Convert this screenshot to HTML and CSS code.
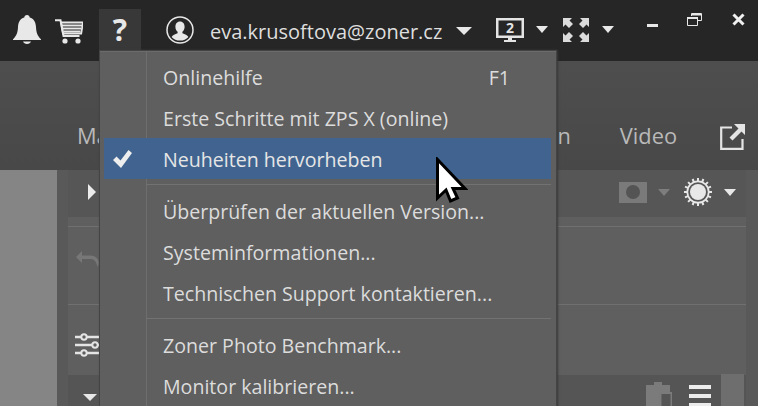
FILE: index.html
```html
<!DOCTYPE html>
<html lang="de">
<head>
<meta charset="utf-8">
<title>Zoner Photo Studio X</title>
<link rel="stylesheet" href="styles.css">
</head>
<body>
<div class="app">
  <header class="topbar">
    <svg class="ic bell" viewBox="0 0 28 29"><path d="M14 0c1.700 0 2.600 1 2.700 2.600C21 3.800 22.800 7.500 23 12c.2 5 1.300 8.800 5 12.200V25H0v-.8c3.700-3.400 4.800-7.200 5-12.200.2-4.500 2-8.200 6.300-9.400C11.400 1 12.300 0 14 0z" fill="#e8e8e8"/><path d="M10 26.500h8c-.5 1.600-2.100 2.500-4 2.500s-3.500-.9-4-2.500z" fill="#e8e8e8"/></svg>
    <svg class="ic cart" viewBox="0 0 28 25"><path d="M0 1.200h5.500l3 15.800h16" fill="none" stroke="#e8e8e8" stroke-width="2"/><path d="M6 3.500h22l-1.800 11H8z" fill="none" stroke="#e8e8e8" stroke-width="1.800"/><path d="M7 6.500h20M8 9.500h18M8.500 12.500h17" stroke="#e8e8e8" stroke-width="1.800"/><circle cx="10" cy="22" r="2.600" fill="#e8e8e8"/><circle cx="23" cy="22" r="2.600" fill="#e8e8e8"/></svg>
    <div class="help">?</div>
    <svg class="ic user" viewBox="0 0 28 28"><circle cx="14" cy="14" r="13" fill="none" stroke="#e8e8e8" stroke-width="1.500"/><path d="M14 5.500c3 0 4.600 2.300 4.600 5.200 0 2.300-1 4.200-2.200 5.100v1.500c2.500 1 5 1.700 6 3.600C20.400 23.300 17.400 24.500 14 24.500s-6.400-1.200-8.400-3.600c1-1.900 3.500-2.600 6-3.600v-1.500c-1.200-.9-2.200-2.800-2.200-5.100 0-2.900 1.600-5.200 4.600-5.200z" fill="#e8e8e8"/></svg>
    <span class="email">eva.krusoftova@zoner.cz</span>
    <i class="tri tri-lg email-tri"></i>
    <svg class="ic monitor" viewBox="0 0 28 24"><path d="M0 0h28v20H16v2h4v2H8v-2h4v-2H0z" fill="#e4e4e4"/><rect x="2.500" y="2.500" width="23" height="15" fill="#262626"/><text x="14" y="15" text-anchor="middle" class="monitor-num">2</text></svg>
    <i class="tri mon-tri"></i>
    <svg class="ic expand" viewBox="0 0 26 24"><path d="M0 0h9L6.500 2.500 10 6 6 10 2.500 6.500 0 9zM26 0v9l-2.500-2.500L20 10l-4-4 3.500-3.500L17 0zM0 24v-9l2.500 2.500L6 14l4 4-3.500 3.500L9 24zM26 24h-9l2.500-2.500L16 18l4-4 3.500 3.500L26 15z" fill="#dcdcdc"/></svg>
    <i class="tri exp-tri"></i>
    <svg class="ic win-min" viewBox="0 0 11 3"><rect width="11" height="3" fill="#e8e8e8"/></svg>
    <svg class="ic win-res" viewBox="0 0 15 13"><path d="M4.500 3V.5h10v7H11M.5 4.500h10v8H.5z" fill="none" stroke="#e8e8e8"/><path d="M4 1h11v1.500H4zM0 4h11v2H0z" fill="#e8e8e8"/></svg>
    <svg class="ic win-close" viewBox="0 0 13 13"><path d="M1.500 1.500l10 10M11.500 1.500l-10 10" stroke="#f0f0f0" stroke-width="3"/></svg>
  </header>

  <nav class="modules">
    <div class="module-list">
      <span class="module-first">Manager</span><span>Erstellen</span><span>Video</span>
    </div>
    <svg class="ic popout" viewBox="0 0 25 26"><path d="M12 3.500H1.200v21.300h21.300V15" fill="none" stroke="#e4e4e4" stroke-width="2.200"/><path d="M14 0h11v11l-3.500-3.500-9 9-3-3 9-9z" fill="#e4e4e4"/></svg>
  </nav>

  <main class="workspace">
    <div class="preview"></div>
    <section class="panel">
      <div class="panel-head">
        <i class="tri-right"></i>
        <div class="head-tools">
          <span class="cam"><i></i></span>
          <i class="tri dim-tri"></i>
          <svg class="ic gear" viewBox="0 0 28 28"><g stroke="#e8e8e8" stroke-width="2"><path d="M14 0v4M14 24v4M0 14h4M24 14h4M4.100 4.100l2.800 2.800M21.100 21.100l2.800 2.800M4.100 23.900l2.800-2.800M21.100 6.900l2.800-2.800M8.600 1l1.500 3.700M17.900 23.300l1.500 3.700M1 8.600l3.700 1.500M23.300 17.900l3.700 1.500M1 19.400l3.700-1.500M23.300 10.100L27 8.600M8.600 27l1.500-3.700M17.900 4.700L19.400 1"/></g><circle cx="14" cy="14" r="11.500" fill="#e8e8e8"/><circle cx="14" cy="14" r="9.800" fill="#565656"/><circle cx="14" cy="14" r="8" fill="#e8e8e8"/></svg>
          <i class="tri gear-tri"></i>
        </div>
      </div>
      <div class="panel-body">
        <div class="tool-row undo-row">
          <svg class="ic undo" viewBox="0 0 26 20"><path d="M7 1L1 7l6 6V9h8c3.500 0 6 1.500 7.500 8 2-3 2.500-11-7.500-11.500H7z" fill="#777"/></svg>
        </div>
        <div class="tool-row sliders-row">
          <svg class="ic sliders" viewBox="0 0 26 24"><g stroke="#e4e4e4" stroke-width="2.400"><path d="M0 4h26M0 12h26M0 20h26"/></g><g fill="#5f5f5f" stroke="#e4e4e4" stroke-width="2"><circle cx="9" cy="4" r="2.700"/><circle cx="20" cy="12" r="2.700"/><circle cx="9" cy="20" r="2.700"/></g></svg>
        </div>
      </div>
      <div class="panel-foot">
        <i class="tri foot-tri"></i>
        <svg class="ic clip" viewBox="0 0 26 30"><path d="M0 3h8V0h8v3h8v7H14v16H0z" fill="#7b7b7b"/><path d="M14.500 11h11v18h-11z" fill="#555" stroke="#7b7b7b" stroke-width="2"/></svg>
        <div class="burger"><i></i><i></i><i></i></div>
        <div class="scroll-thumb"></div>
      </div>
    </section>
  </main>

  <div class="menu">
    <div class="row"><span class="label">Onlinehilfe</span><span class="key">F1</span></div>
    <div class="row"><span class="label">Erste Schritte mit ZPS X (online)</span></div>
    <div class="row active">
      <svg class="ic check" viewBox="0 0 19 18"><path d="M0 10l3.500-3.500 4 4L15.500 0 19 3 8 18z" fill="#eee"/></svg>
      <span class="label">Neuheiten hervorheben</span>
    </div>
    <div class="sep"></div>
    <div class="row"><span class="label">Überprüfen der aktuellen Version...</span></div>
    <div class="row"><span class="label">Systeminformationen...</span></div>
    <div class="row"><span class="label">Technischen Support kontaktieren...</span></div>
    <div class="sep"></div>
    <div class="row"><span class="label">Zoner Photo Benchmark...</span></div>
    <div class="row"><span class="label">Monitor kalibrieren...</span></div>
  </div>

  <svg class="pointer" viewBox="0 0 32 47"><path d="M1.500 2.500V41l8.500-8 4.500 11 7-3-4.500-9.500H29z" fill="#fff" stroke="#000" stroke-width="3"/></svg>
</div>
</body>
</html>
```

FILE: styles.css
```css
* { box-sizing: border-box; }
html, body { margin: 0; height: 100%; overflow: hidden; background: #262626; }
body { font-family: "Open Sans", "Noto Sans", sans-serif; color: #dcdcdc; }
.ic { display: block; flex: none; }
i { display: block; }

.app { position: relative; width: 758px; height: 406px; overflow: hidden; display: flex; flex-direction: column; }

/* top bar */
.topbar { height: 61px; flex: none; background: #262626; display: flex; align-items: flex-start; padding-left: 13px; }
.bell { width: 28px; height: 29px; margin-top: 15px; }
.cart { width: 28px; height: 25px; margin: 19px 0 0 14px; }
.help { width: 42px; height: 42px; margin: 9px 0 0 16px; background: #383838; color: #e8e8e8; font: 700 30px/42px "Open Sans", sans-serif; text-align: center; }
.user { width: 28px; height: 28px; margin: 16px 0 0 25px; }
.email { width: 231px; margin: 18px 0 0 16px; font-size: 20px; line-height: 27px; white-space: nowrap; color: #dedede; }
.monitor { width: 28px; height: 24px; margin: 18px 0 0 24px; }
.monitor-num { font: 700 14px "Open Sans", sans-serif; fill: #e4e4e4; }
.expand { width: 26px; height: 24px; margin: 18px 0 0 15px; }
.win-min { width: 11px; height: 3px; margin: 24px 0 0 33px; }
.win-res { width: 15px; height: 13px; margin: 13px 0 0 29px; }
.win-close { width: 13px; height: 13px; margin: 13px 0 0 30px; }

.tri { width: 0; height: 0; flex: none; border-style: solid; border-color: #e8e8e8 transparent transparent; border-width: 7px 6.500px 0; }
.tri-lg { border-width: 8px 8.500px 0; }
.email-tri { margin: 27px 0 0 15px; }
.mon-tri { margin: 26px 0 0 12px; }
.exp-tri { margin: 26px 0 0 13px; }

/* module tabs */
.modules { height: 109px; flex: none; background: linear-gradient(#4e4e4e, #484848); display: flex; align-items: flex-start; padding: 60px 13px 0 77px; }
.module-list { width: 600px; display: flex; gap: 49px; font-size: 21.800px; line-height: 30px; color: #b9b9b9; }
.module-first { margin-right: auto; }
.popout { width: 25px; height: 26px; margin: 3px 0 0 43px; }

/* workspace */
.workspace { flex: 1; display: flex; min-height: 0; }
.preview { width: 57px; flex: none; background: #858585; }
.panel { flex: 1; background: #5f5f5f; border-left: 11px solid #595959; border-right: 12px solid #595959; display: flex; flex-direction: column; min-height: 0; }
.panel-head { height: 47px; flex: none; background: #565656; display: flex; align-items: center; justify-content: space-between; padding: 0 10px 3px 20px; }
.tri-right { width: 0; height: 0; border-style: solid; border-color: transparent transparent transparent #ececec; border-width: 8px 0 8px 8px; }
.head-tools { display: flex; align-items: center; }
.cam { width: 28px; height: 21px; background: #7a7a7a; display: flex; align-items: center; justify-content: center; }
.cam i { width: 14px; height: 14px; border-radius: 50%; background: #545454; }
.dim-tri { margin-left: 11px; border-top-color: #7d7d7d; }
.gear { width: 28px; height: 28px; margin-left: 14px; }
.gear-tri { margin-left: 12px; }

.panel-body { flex: 1; min-height: 0; padding-top: 9px; }
.tool-row { border-top: 1px solid #707070; padding-left: 7px; }
.undo-row { height: 78px; padding-top: 23px; }
.undo { width: 26px; height: 20px; }
.sliders-row { height: 71px; padding-top: 28px; }
.sliders { width: 26px; height: 24px; }

.panel-foot { height: 31px; flex: none; background: #555; display: flex; align-items: flex-start; padding-top: 19px; position: relative; }
.foot-tri { margin-left: 15px; border-width: 7px 7.500px 0; }
.clip { width: 26px; height: 30px; position: absolute; left: 578px; top: 7px; }
.burger { position: absolute; left: 621px; top: 10px; width: 22px; display: flex; flex-direction: column; gap: 5px; }
.burger i { height: 4px; background: #ececec; }
.scroll-thumb { position: absolute; left: 653px; top: -1px; width: 23px; height: 32px; background: #6e6e6e; }

/* help menu */
.menu { position: absolute; left: 100px; top: 51px; width: 456px; height: 380px; background: #5f5f5f; border-top: 1px solid #6b6b6b; box-shadow: 0 0 0 1px #444, 1px 0 2px 1px #383838; padding: 4px 5px 0 4px; display: flex; flex-direction: column; background-image: linear-gradient(#6e6e6e, #6e6e6e); background-size: 1px 100%; background-repeat: no-repeat; background-position: 46px 0; }
.row { height: 41px; flex: none; display: flex; align-items: center; padding: 1px 41px 0 59px; font-size: 19.600px; color: #dcdcdc; position: relative; }
.label { white-space: nowrap; }
.key { margin-left: auto; }
.active { background: #40648f; color: #e6e6e6; }
.check { position: absolute; left: 9px; top: 12px; width: 19px; height: 18px; }
.sep { height: 11px; flex: none; margin-left: 42px; position: relative; }
.sep::before { content: ""; display: block; height: 1px; background: #727272; position: absolute; left: 0; right: 0; top: 5px; }

.pointer { position: absolute; left: 436px; top: 157px; width: 32px; height: 47px; }
```
